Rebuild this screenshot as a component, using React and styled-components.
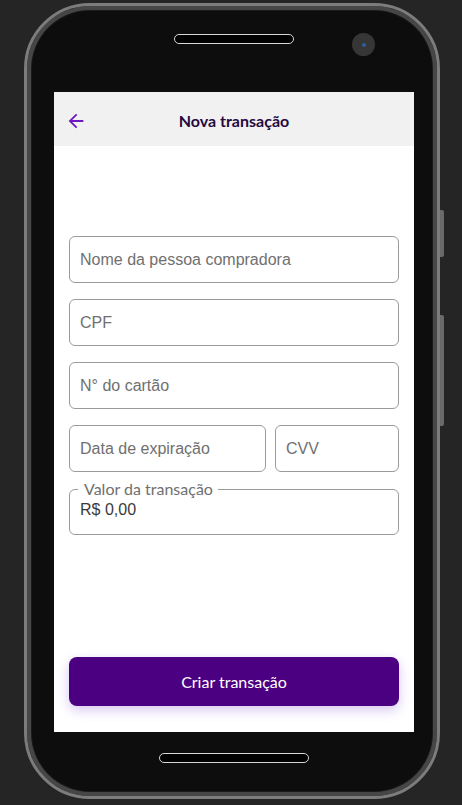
import React, { useState } from "react";
import styled, { createGlobalStyle } from "styled-components";

const GlobalStyle = createGlobalStyle`
  html, body {
    margin: 0;
    padding: 0;
    background: #252525;
    height: 100%;
  }
  body {
    font-family: "Lato", "Liberation Sans", sans-serif;
  }
`;

const Stage = styled.div`
  display: flex;
  align-items: flex-start;
  padding: 3px 0 0 24px;
  height: 805px;
  box-sizing: border-box;
  overflow: hidden;
`;

const Phone = styled.div`
  position: relative;
  width: 416px;
  height: 796px;
  box-sizing: border-box;
  border: 3px solid #7c7c7c;
  border-radius: 66px;
  background: #0d0d0d;
  box-shadow: inset 0 0 0 4px #464646, inset 0 0 0 5px #1a1a1a;
  display: flex;
  flex-direction: column;
  padding: 4px 19px 4px 27px;
`;

const SideButtons = styled.div`
  display: flex;
  flex-direction: column;
  gap: 58px;
  padding-top: 207px;
`;

const SideButton = styled.div`
  width: 4px;
  height: ${(p) => p.$h}px;
  background: #6a6a6a;
  border-radius: 0 2px 2px 0;
`;

const TopBezel = styled.div`
  height: 82px;
  display: flex;
  justify-content: center;
  padding-top: 24px;
  padding-right: 4px;
  box-sizing: border-box;
`;

const Speaker = styled.div`
  width: ${(p) => p.$w}px;
  height: 10px;
  box-sizing: border-box;
  border: 1.5px solid #d6d6d6;
  border-radius: 6px;
  background: #000;
`;

const Camera = styled.div`
  position: absolute;
  top: 27px;
  left: 325px;
  width: 23px;
  height: 23px;
  border-radius: 50%;
  background: #363636;
  display: flex;
  align-items: center;
  justify-content: center;

  &::after {
    content: "";
    width: 4px;
    height: 4px;
    border-radius: 50%;
    background: #2c5f9e;
  }
`;

const Screen = styled.div`
  width: 360px;
  height: 640px;
  background: #fff;
  display: flex;
  flex-direction: column;
`;

const BottomBezel = styled.div`
  display: flex;
  justify-content: center;
  padding-top: 21px;
  padding-right: 4px;
`;

const Header = styled.header`
  height: 54px;
  box-sizing: border-box;
  padding: 3px 11px 0;
  background: #f1f1f1;
  display: flex;
  align-items: center;
`;

const BackButton = styled.button`
  width: 22px;
  height: 22px;
  padding: 0;
  border: none;
  background: none;
  color: #6f17c0;
  display: flex;
  cursor: pointer;
`;

const Title = styled.h1`
  flex: 1;
  margin: 0;
  text-align: center;
  font-family: "Lato", sans-serif;
  font-weight: 700;
  font-size: 16px;
  color: #25093f;
`;

const Spacer = styled.div`
  width: 22px;
`;

const Form = styled.form`
  flex: 1;
  display: flex;
  flex-direction: column;
  padding: 90px 15px 26px;
`;

const Fields = styled.div`
  display: flex;
  flex-direction: column;
  gap: 16px;
`;

const Row = styled.div`
  display: grid;
  grid-template-columns: 197px 1fr;
  gap: 9px;
`;

const Input = styled.input`
  height: 47px;
  width: 100%;
  box-sizing: border-box;
  border: 1px solid #9b9b9b;
  border-radius: 6px;
  padding: 0 10px;
  font-family: "Liberation Sans", Arial, sans-serif;
  font-size: 16px;
  color: #333;
  outline: none;
  background: #fff;

  &::placeholder {
    color: #707070;
  }
`;

const Outlined = styled.fieldset`
  margin: -7px 0 0;
  padding: 0 0 11px;
  min-width: 0;
  border: 1px solid #9b9b9b;
  border-radius: 6px;
`;

const Legend = styled.legend`
  margin-left: 8px;
  padding: 0 5px 0 6px;
  font-family: "Lato", sans-serif;
  font-size: 16px;
  line-height: 16px;
  color: #707070;
`;

const InnerInput = styled.input`
  display: block;
  width: 100%;
  height: 26px;
  box-sizing: border-box;
  border: none;
  padding: 0 10px;
  font-family: "Liberation Sans", Arial, sans-serif;
  font-size: 16px;
  color: #3a3a3a;
  outline: none;
  background: transparent;
`;

const SubmitButton = styled.button`
  margin-top: auto;
  height: 49px;
  border: none;
  border-radius: 8px;
  background: #4b0082;
  color: #fff;
  font-family: "Lato", sans-serif;
  font-size: 16px;
  cursor: pointer;
  box-shadow: 0 4px 12px rgba(110, 50, 200, 0.28);
`;

const ArrowBack = () => (
  <svg width="22" height="22" viewBox="0 0 24 24" fill="currentColor">
    <path d="M20 11H7.83l5.59-5.59L12 4l-8 8 8 8 1.41-1.41L7.83 13H20v-2z" />
  </svg>
);

const App = () => {
  const [valor, setValor] = useState("R$ 0,00");

  return (
    <>
      <GlobalStyle />
      <Stage>
        <Phone>
          <TopBezel>
            <Speaker $w={120} />
          </TopBezel>
          <Camera />
          <Screen>
            <Header>
              <BackButton type="button" aria-label="Voltar">
                <ArrowBack />
              </BackButton>
              <Title>Nova transação</Title>
              <Spacer />
            </Header>
            <Form onSubmit={(e) => e.preventDefault()}>
              <Fields>
                <Input placeholder="Nome da pessoa compradora" />
                <Input placeholder="CPF" />
                <Input placeholder="N° do cartão" />
                <Row>
                  <Input placeholder="Data de expiração" />
                  <Input placeholder="CVV" />
                </Row>
                <Outlined>
                  <Legend>Valor da transação</Legend>
                  <InnerInput
                    value={valor}
                    onChange={(e) => setValor(e.target.value)}
                  />
                </Outlined>
              </Fields>
              <SubmitButton type="submit">Criar transação</SubmitButton>
            </Form>
          </Screen>
          <BottomBezel>
            <Speaker $w={150} />
          </BottomBezel>
        </Phone>
        <SideButtons>
          <SideButton $h={47} />
          <SideButton $h={111} />
        </SideButtons>
      </Stage>
    </>
  );
};

export default App;
